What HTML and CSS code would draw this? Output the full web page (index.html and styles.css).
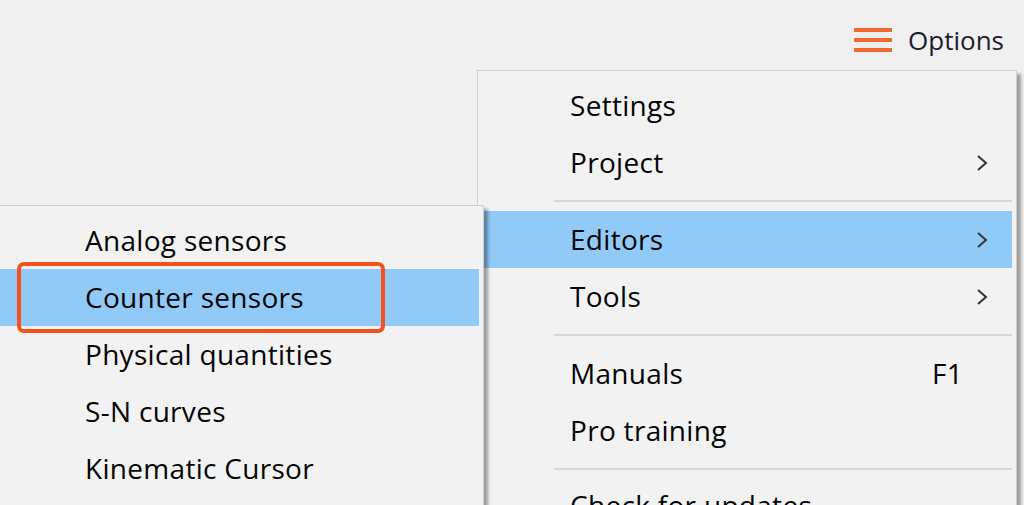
FILE: index.html
```html
<!DOCTYPE html>
<html>
<head>
<meta charset="utf-8">
<link rel="stylesheet" href="styles.css">
</head>
<body>

<div class="topbar">
  <div class="options">
    <svg class="burger" width="38" height="24" viewBox="0 0 38 24">
      <rect x="0" y="0" width="38" height="4" fill="#f26a2c"/>
      <rect x="0" y="10" width="38" height="4" fill="#f26a2c"/>
      <rect x="0" y="20" width="38" height="4" fill="#f26a2c"/>
    </svg>
    <span>Options</span>
  </div>
</div>

<div class="menu main-menu">
  <div class="item"><span class="label">Settings</span></div>
  <div class="item"><span class="label">Project</span><span class="arrow"><svg width="12" height="18" viewBox="0 0 12 18"><path d="M2 2 L10 9 L2 16" fill="none" stroke="#333" stroke-width="2"/></svg></span></div>
  <div class="sep"></div>
  <div class="item active"><span class="label">Editors</span><span class="arrow"><svg width="12" height="18" viewBox="0 0 12 18"><path d="M2 2 L10 9 L2 16" fill="none" stroke="#333" stroke-width="2"/></svg></span></div>
  <div class="item"><span class="label">Tools</span><span class="arrow"><svg width="12" height="18" viewBox="0 0 12 18"><path d="M2 2 L10 9 L2 16" fill="none" stroke="#333" stroke-width="2"/></svg></span></div>
  <div class="sep"></div>
  <div class="item"><span class="label">Manuals</span><span class="key">F1</span></div>
  <div class="item"><span class="label">Pro training</span></div>
  <div class="sep"></div>
  <div class="item last"><span class="label">Check for updates</span></div>
</div>

<div class="menu sub-menu">
  <div class="item"><span class="label">Analog sensors</span></div>
  <div class="item active"><span class="label">Counter sensors</span></div>
  <div class="item"><span class="label">Physical quantities</span></div>
  <div class="item"><span class="label">S-N curves</span></div>
  <div class="item"><span class="label">Kinematic Cursor</span></div>
  <div class="mark"></div>
</div>

</body>
</html>
```

FILE: styles.css
```css
body {
    margin: 0;
    width: 1024px;
    height: 505px;
    overflow: hidden;
    position: relative;
    background: #f0f0f0;
    font-family: "Open Sans", "Noto Sans", sans-serif;
    font-size: 26px;
    color: #111;
}
.topbar {
    display: flex;
    justify-content: flex-end;
    padding: 22px 20px 0 0;
}
.options {
    display: flex;
    align-items: center;
    gap: 16px;
    color: #1b1b33;
}
.burger {
    display: block;
}
.menu {
    position: absolute;
    background: #f2f2f2;
    border: 1px solid #cfcfcf;
    padding: 6px 4px;
    box-shadow: 4px 4px 3px rgba(0, 0, 0, 0.35);
    font-size: 28px;
    letter-spacing: 0.3px;
    color: #050505;
}
.main-menu {
    left: 477px;
    top: 70px;
    width: 530px;
    height: 422px;
}
.sub-menu {
    left: -8px;
    top: 205px;
    width: 482px;
    height: 287px;
}
.item {
    height: 57px;
    display: flex;
    align-items: center;
    padding-left: 88px;
}
.item.active {
    background: #91c9f7;
}
.item.last {
    align-items: flex-start;
    padding-top: 12px;
    height: 45px;
}
.label {
    flex: 1;
    line-height: 1;
    padding-bottom: 1px;
}
.key {
    width: 80px;
    line-height: 1;
    padding-bottom: 1px;
}
.arrow {
    width: 36px;
    display: flex;
    align-items: center;
}
.sep {
    height: 20px;
    margin-left: 72px;
    display: flex;
    align-items: center;
}
.sep::after {
    content: "";
    flex: 1;
    border-top: 2px solid #d8d8d8;
}
.mark {
    position: absolute;
    left: 24px;
    top: 56px;
    width: 360px;
    height: 63px;
    border: 4px solid #f4511e;
    border-radius: 7px;
}
```
